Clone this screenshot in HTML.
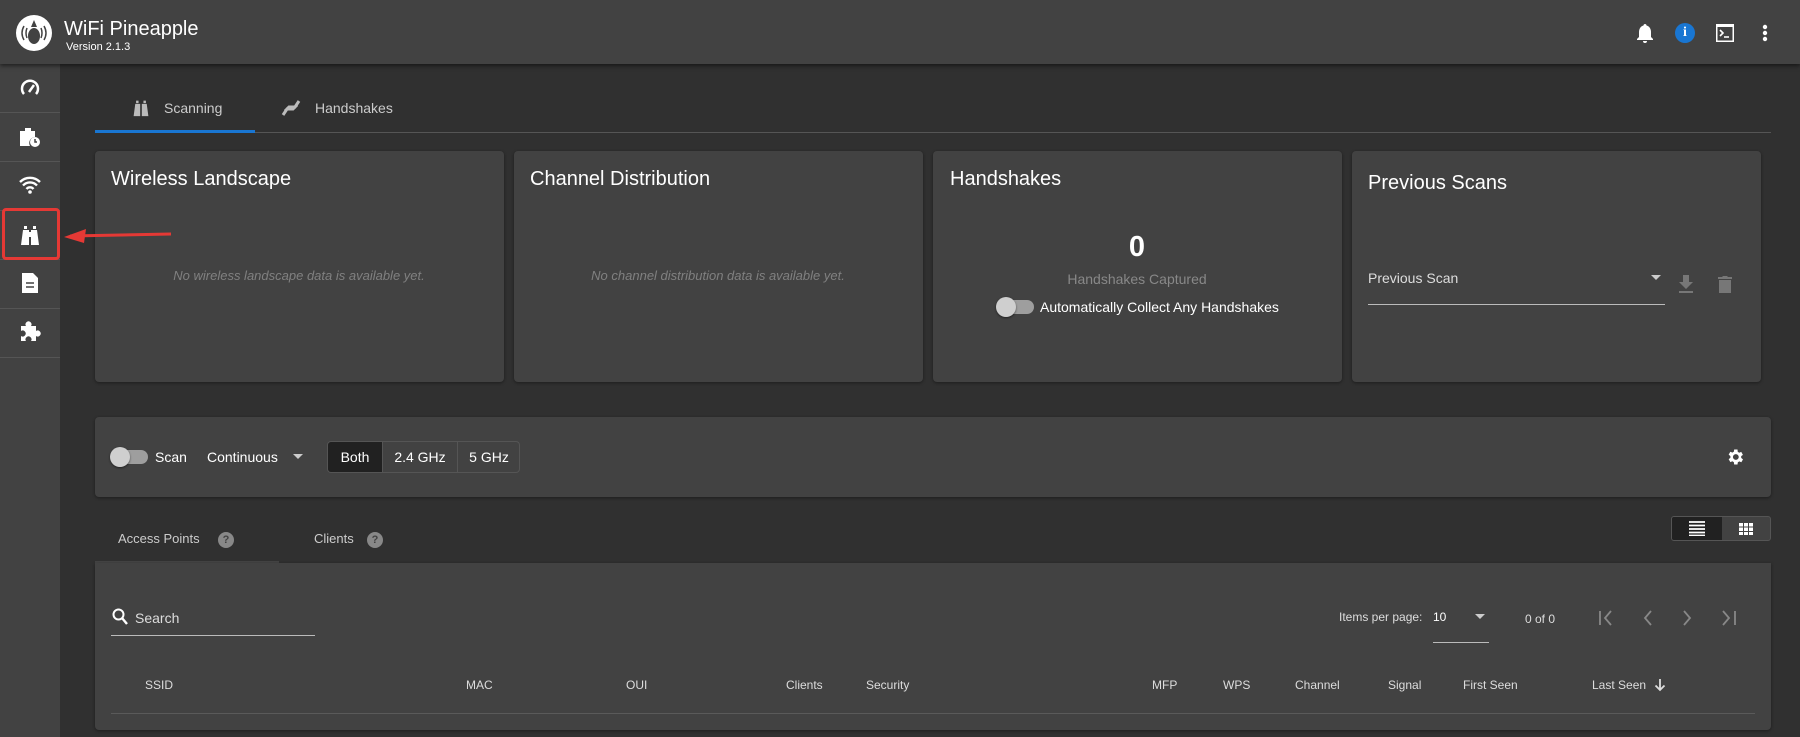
<!DOCTYPE html>
<html><head><meta charset="utf-8"><style>
*{box-sizing:border-box;margin:0;padding:0}
body{width:1800px;height:737px;overflow:hidden;background:#303030;font-family:"Liberation Sans",sans-serif;color:#fff;position:relative}
.a{position:absolute}
.hdr{left:0;top:0;width:1800px;height:64px;background:#424242;box-shadow:0 2px 4px rgba(0,0,0,.5);z-index:2}
.side{left:0;top:64px;width:60px;height:673px;background:#424242}
.sep{position:absolute;left:0;width:60px;height:1px;background:#555}
.card{background:#424242;border-radius:4px;box-shadow:0 1px 3px rgba(0,0,0,.4)}
.t{font-size:20px;white-space:nowrap}
.em{font-size:13px;font-style:italic;color:#808080;white-space:nowrap;transform:translateX(-50%)}
.s{font-size:14px;white-space:nowrap}
.h{font-size:12px;color:#ddd;white-space:nowrap}
.tog{width:36px;height:14px;border-radius:7px;background:#9e9e9e}
.tog:before{content:"";position:absolute;left:-2px;top:-3px;width:20px;height:20px;border-radius:50%;background:#cfcfcf;box-shadow:0 1px 2px rgba(0,0,0,.5)}
.q{width:16px;height:16px;border-radius:50%;background:#888;color:#424242;font-size:11px;font-weight:bold;text-align:center;line-height:16px}
</style></head><body>
<div class="a hdr">
 <svg class="a" style="left:15px;top:14px" width="38" height="38" viewBox="0 0 38 38"><circle cx="19" cy="19" r="18" fill="#fff"/><ellipse cx="19" cy="22" rx="6" ry="8" fill="#424242"/><path d="M19 6l-3 7h6z" fill="#424242"/><path d="M9 12q-4 7 0 14M12 14q-2 5 0 10M29 12q4 7 0 14M26 14q2 5 0 10" stroke="#424242" stroke-width="1.5" fill="none"/></svg>
 <div class="a" style="left:64px;top:18px;font-size:20px">WiFi Pineapple</div>
 <div class="a" style="left:66px;top:41px;font-size:11px">Version 2.1.3</div>
 <svg class="a" style="left:1636px;top:23px" width="18" height="20" viewBox="0 0 18 20"><path d="M9 1c1 0 1.5.7 1.5 1.5 3 .8 4.5 3.5 4.5 6.5v5l2 2v1H1v-1l2-2V9c0-3 1.5-5.7 4.5-6.5C7.5 1.7 8 1 9 1zM7 18h4a2 2 0 0 1-4 0z" fill="#fff"/></svg>
 <div class="a" style="left:1675px;top:23px;width:20px;height:20px;border-radius:50%;background:#1976d2;font-size:14px;font-weight:bold;text-align:center;line-height:20px;font-family:'Liberation Serif',serif">i</div>
 <svg class="a" style="left:1715px;top:23px" width="20" height="20" viewBox="0 0 20 20"><rect x="1" y="1" width="18" height="18" fill="#fff"/><rect x="2.5" y="4" width="15" height="13.5" fill="#424242"/><path d="M5 7l3 3-3 3" stroke="#fff" stroke-width="1.6" fill="none"/><path d="M9 14h5" stroke="#fff" stroke-width="1.6"/></svg>
 <svg class="a" style="left:1761px;top:23px" width="8" height="20"><circle cx="4" cy="4" r="2.2" fill="#fff"/><circle cx="4" cy="10" r="2.2" fill="#fff"/><circle cx="4" cy="16" r="2.2" fill="#fff"/></svg>
</div>
<div class="a side">
 <div class="sep" style="top:48px"></div><div class="sep" style="top:97px"></div><div class="sep" style="top:146px"></div><div class="sep" style="top:195px"></div><div class="sep" style="top:244px"></div><div class="sep" style="top:293px"></div>
 <svg class="a" style="left:20px;top:14px" width="20" height="20" viewBox="0 0 20 20"><path d="M4 16A8 8 0 1 1 16 16" stroke="#fff" stroke-width="2.5" fill="none"/><path d="M9 14l5-7" stroke="#fff" stroke-width="2.5"/></svg>
 <svg class="a" style="left:19px;top:62px" width="22" height="22" viewBox="0 0 22 22"><path d="M6 2h6v3h4v6a6 6 0 0 0-5 9H1V5h5z" fill="#fff"/><circle cx="16" cy="16" r="5" fill="#fff"/><path d="M16 13v3h2" stroke="#424242" stroke-width="1.5" fill="none"/></svg>
 <svg class="a" style="left:18px;top:111px" width="24" height="20" viewBox="0 0 24 20"><path d="M2 7a14 14 0 0 1 20 0M5 10.5a9.5 9.5 0 0 1 14 0M8.5 14a4.5 4.5 0 0 1 7 0" stroke="#fff" stroke-width="2.4" fill="none"/><circle cx="12" cy="17" r="1.8" fill="#fff"/></svg>
 <svg class="a" style="left:20px;top:160px" width="20" height="22" viewBox="0 0 20 22"><path d="M4 2h3v3H4zM13 2h3v3h-3zM3 6h6v15H1zM11 6h6l2 15h-8z" fill="#fff"/><rect x="9" y="8" width="2" height="5" fill="#fff"/></svg>
 <svg class="a" style="left:21px;top:208px" width="18" height="22" viewBox="0 0 18 22"><path d="M1 1h11l5 5v15H1z" fill="#fff"/><path d="M5 11h8M5 15h8" stroke="#424242" stroke-width="1.6"/></svg>
 <svg class="a" style="left:19px;top:257px" width="22" height="22" viewBox="0 0 22 22"><path d="M2 5h5a3 3 0 1 1 5 0h5v5a3 3 0 1 1 0 5v5h-5a3 3 0 1 0-5 0H2v-5a3 3 0 1 0 0-5z" fill="#fff"/></svg>
</div>

<!-- tabs -->
<div class="a" style="left:95px;top:132px;width:1676px;height:1px;background:#555"></div>
<div class="a" style="left:95px;top:130px;width:160px;height:3px;background:#1976d2"></div>
<svg class="a" style="left:132px;top:99px" width="18" height="18" viewBox="0 0 20 22"><path d="M4 2h3v3H4zM13 2h3v3h-3zM3 6h6v15H1zM11 6h6l2 15h-8z" fill="#bbb"/></svg>
<div class="a s" style="left:164px;top:100px;color:#ccc">Scanning</div>
<svg class="a" style="left:281px;top:98px" width="20" height="20" viewBox="0 0 20 20"><path d="M2 17l4-6h6l4-4M18 3l-4 6H8l-4 4" stroke="#bbb" stroke-width="3" fill="none"/></svg>
<div class="a s" style="left:315px;top:100px;color:#ccc">Handshakes</div>

<!-- cards -->
<div class="a card" style="left:95px;top:151px;width:409px;height:231px"></div>
<div class="a t" style="left:111px;top:168px">Wireless Landscape</div>
<div class="a em" style="left:299px;top:268px">No wireless landscape data is available yet.</div>
<div class="a card" style="left:514px;top:151px;width:409px;height:231px"></div>
<div class="a t" style="left:530px;top:168px">Channel Distribution</div>
<div class="a em" style="left:718px;top:268px">No channel distribution data is available yet.</div>
<div class="a card" style="left:933px;top:151px;width:409px;height:231px"></div>
<div class="a t" style="left:950px;top:168px">Handshakes</div>
<div class="a" style="left:1137px;top:231px;transform:translateX(-50%);font-size:29px;font-weight:bold">0</div>
<div class="a" style="left:1137px;top:271px;transform:translateX(-50%);font-size:14px;color:#888;white-space:nowrap">Handshakes Captured</div>
<div class="a tog" style="left:998px;top:300px"></div>
<div class="a s" style="left:1040px;top:299px">Automatically Collect Any Handshakes</div>
<div class="a card" style="left:1352px;top:151px;width:409px;height:231px"></div>
<div class="a t" style="left:1368px;top:172px">Previous Scans</div>
<div class="a s" style="left:1368px;top:270px;color:#ddd">Previous Scan</div>
<div class="a" style="left:1368px;top:304px;width:297px;height:1px;background:#bbb"></div>
<div class="a" style="left:1651px;top:275px;border:5px solid transparent;border-top-color:#ccc"></div>
<svg class="a" style="left:1677px;top:274px" width="18" height="20" viewBox="0 0 18 20"><path d="M6 1h6v7h4l-7 7-7-7h4zM2 17h14v2H2z" fill="#777"/></svg>
<svg class="a" style="left:1717px;top:274px" width="16" height="20" viewBox="0 0 16 20"><path d="M1 3h4l1-1h4l1 1h4v2H1zM2 6h12v13H2z" fill="#777"/></svg>

<!-- red highlight -->
<div class="a" style="left:2px;top:208px;width:58px;height:52px;border:3px solid #e53935;border-radius:4px;z-index:5"></div>
<svg class="a" style="left:62px;top:226px;z-index:5" width="112" height="20"><path d="M8 10L109 8" stroke="#e53935" stroke-width="3"/><path d="M2 11L24 3L22 17z" fill="#e53935"/></svg>

<!-- scan bar -->
<div class="a card" style="left:95px;top:417px;width:1676px;height:80px"></div>
<div class="a tog" style="left:112px;top:450px"></div>
<div class="a s" style="left:155px;top:449px">Scan</div>
<div class="a s" style="left:207px;top:449px">Continuous</div>
<div class="a" style="left:293px;top:454px;border:5px solid transparent;border-top-color:#ccc"></div>
<div class="a" style="left:327px;top:441px;width:193px;height:32px;border:1px solid #555;border-radius:4px;overflow:hidden;font-size:14px">
 <div class="a" style="left:0;top:0;width:54px;height:30px;background:#212121;text-align:center;line-height:30px">Both</div>
 <div class="a" style="left:54px;top:0;width:75px;height:30px;border-left:1px solid #555;text-align:center;line-height:30px">2.4 GHz</div>
 <div class="a" style="left:129px;top:0;width:63px;height:30px;border-left:1px solid #555;text-align:center;line-height:30px">5 GHz</div>
</div>
<svg class="a" style="left:1725px;top:447px" width="20" height="20" viewBox="0 0 24 24"><path fill="#fff" d="M19.4 13a7.6 7.6 0 0 0 0-2l2.1-1.6-2-3.5-2.5 1a7 7 0 0 0-1.7-1L15 3h-4l-.4 2.7a7 7 0 0 0-1.7 1l-2.5-1-2 3.5L6.5 11a7.6 7.6 0 0 0 0 2l-2.1 1.6 2 3.5 2.5-1a7 7 0 0 0 1.7 1L11 21h4l.4-2.7a7 7 0 0 0 1.7-1l2.5 1 2-3.5zM13 15.5a3.5 3.5 0 1 1 0-7 3.5 3.5 0 0 1 0 7z"/></svg>

<!-- data tabs -->
<div class="a s" style="left:118px;top:531px;color:#ccc;font-size:13px">Access Points</div>
<div class="a q" style="left:218px;top:532px">?</div>
<div class="a s" style="left:314px;top:531px;color:#ccc;font-size:13px">Clients</div>
<div class="a q" style="left:367px;top:532px">?</div>
<div class="a" style="left:95px;top:561px;width:184px;height:2px;background:#444"></div>
<div class="a" style="left:1671px;top:516px;width:100px;height:25px;border:1px solid #555;border-radius:3px;background:#424242;overflow:hidden">
 <div class="a" style="left:0;top:0;width:50px;height:23px;background:#212121"></div>
 <svg class="a" style="left:17px;top:4px" width="16" height="15"><path d="M0 1h16M0 4.5h16M0 8h16M0 11.5h16M0 14.5h16" stroke="#fff" stroke-width="1.8"/></svg>
 <svg class="a" style="left:67px;top:6px" width="14" height="12"><path fill="#fff" d="M0 0h4v3.5H0zM5 0h4v3.5H5zM10 0h4v3.5h-4zM0 4.5h4v3.5H0zM5 4.5h4v3.5H5zM10 4.5h4v3.5h-4zM0 9h4v3H0zM5 9h4v3H5zM10 9h4v3h-4z"/></svg>
</div>

<!-- table -->
<div class="a card" style="left:95px;top:563px;width:1676px;height:167px;border-radius:0 0 4px 4px"></div>
<svg class="a" style="left:112px;top:608px" width="16" height="18" viewBox="0 0 16 18"><circle cx="6.5" cy="6.5" r="5" stroke="#fff" stroke-width="2" fill="none"/><path d="M10 10l5 6" stroke="#fff" stroke-width="2.4"/></svg>
<div class="a s" style="left:135px;top:610px;color:#ddd">Search</div>
<div class="a" style="left:111px;top:635px;width:204px;height:1px;background:#bbb"></div>
<div class="a h" style="left:1339px;top:610px">Items per page:</div>
<div class="a h" style="left:1433px;top:610px;color:#fff">10</div>
<div class="a" style="left:1475px;top:614px;border:5px solid transparent;border-top-color:#ccc"></div>
<div class="a" style="left:1433px;top:642px;width:56px;height:1px;background:#bbb"></div>
<div class="a h" style="left:1525px;top:612px">0 of 0</div>
<svg class="a" style="left:1598px;top:608px" width="150" height="20"><g stroke="#888" stroke-width="1.8" fill="none"><path d="M2 3v14M13 3l-6 7 6 7"/><path d="M53 3l-6 7 6 7"/><path d="M86 3l6 7-6 7"/><path d="M125 3l6 7-6 7M137 3v14"/></g></svg>
<div class="a h" style="left:145px;top:678px">SSID</div>
<div class="a h" style="left:466px;top:678px">MAC</div>
<div class="a h" style="left:626px;top:678px">OUI</div>
<div class="a h" style="left:786px;top:678px">Clients</div>
<div class="a h" style="left:866px;top:678px">Security</div>
<div class="a h" style="left:1152px;top:678px">MFP</div>
<div class="a h" style="left:1223px;top:678px">WPS</div>
<div class="a h" style="left:1295px;top:678px">Channel</div>
<div class="a h" style="left:1388px;top:678px">Signal</div>
<div class="a h" style="left:1463px;top:678px">First Seen</div>
<div class="a h" style="left:1592px;top:678px">Last Seen</div>
<svg class="a" style="left:1654px;top:678px" width="12" height="14"><path d="M6 1v11M1.5 7.5L6 12l4.5-4.5" stroke="#ddd" stroke-width="1.8" fill="none"/></svg>
<div class="a" style="left:111px;top:713px;width:1644px;height:1px;background:#5a5a5a"></div>
</body></html>
